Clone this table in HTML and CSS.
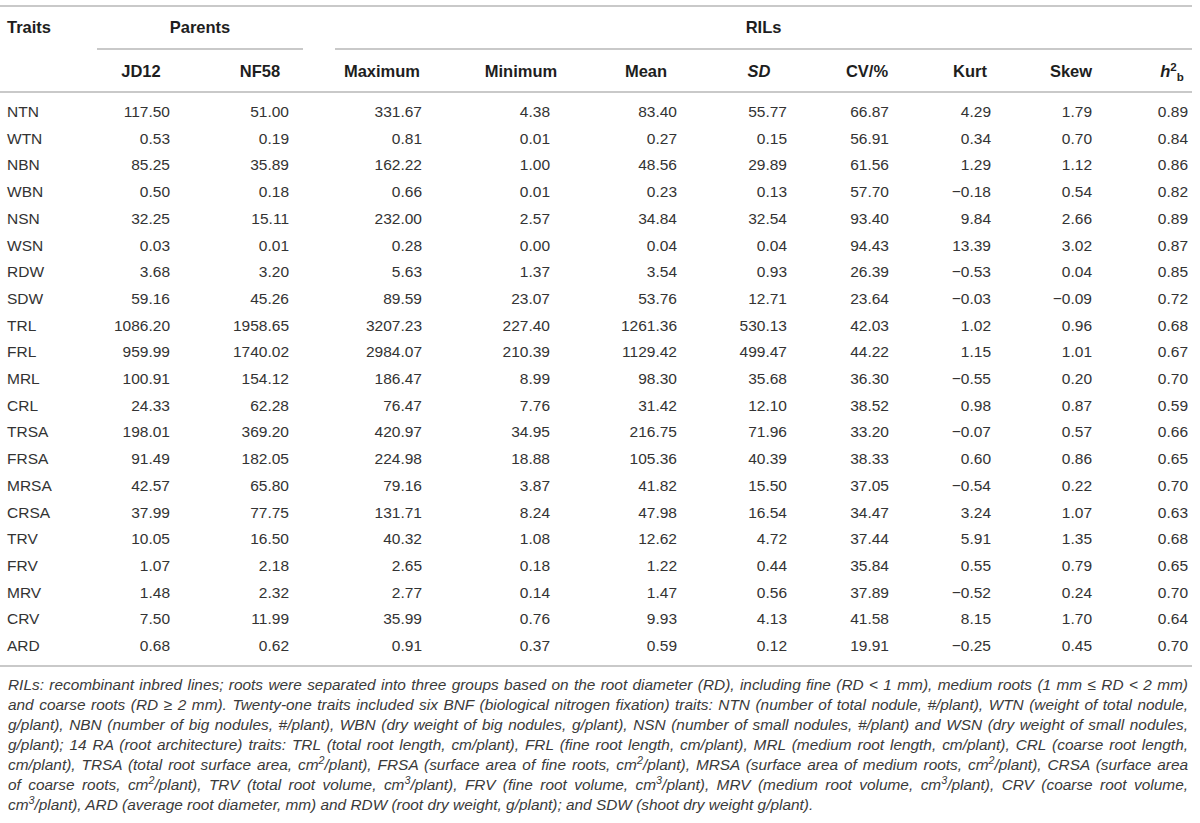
FILE: index.html
```html
<!DOCTYPE html>
<html lang="en">
<head>
    <meta charset="UTF-8">
    <meta name="viewport" content="width=device-width, initial-scale=1.0">
    <title>Traits of parents and RILs</title>
    <link rel="stylesheet" href="styles.css">
</head>
<body>

<div id="table-wrap">
    <table id="traits-table">
        <colgroup>
            <col class="col-trait">
            <col class="col-jd">
            <col class="col-nf">
            <col class="col-max">
            <col class="col-min">
            <col class="col-mean">
            <col class="col-sd">
            <col class="col-cv">
            <col class="col-kurt">
            <col class="col-skew">
            <col class="col-h2">
        </colgroup>
        <thead>
            <tr class="group-row">
                <th class="trait-head">Traits</th>
                <th colspan="2" class="group"><span class="group-label">Parents</span></th>
                <th colspan="8" class="group group-last"><span class="group-label">RILs</span></th>
            </tr>
            <tr class="sub-row">
                <th></th>
                <th>JD12</th>
                <th>NF58</th>
                <th>Maximum</th>
                <th>Minimum</th>
                <th>Mean</th>
                <th><i>SD</i></th>
                <th>CV/%</th>
                <th>Kurt</th>
                <th>Skew</th>
                <th><i>h</i><sup>2</sup><sub>b</sub></th>
            </tr>
        </thead>
        <tbody>
            <tr><td>NTN</td><td>117.50</td><td>51.00</td><td>331.67</td><td>4.38</td><td>83.40</td><td>55.77</td><td>66.87</td><td>4.29</td><td>1.79</td><td>0.89</td></tr>
            <tr><td>WTN</td><td>0.53</td><td>0.19</td><td>0.81</td><td>0.01</td><td>0.27</td><td>0.15</td><td>56.91</td><td>0.34</td><td>0.70</td><td>0.84</td></tr>
            <tr><td>NBN</td><td>85.25</td><td>35.89</td><td>162.22</td><td>1.00</td><td>48.56</td><td>29.89</td><td>61.56</td><td>1.29</td><td>1.12</td><td>0.86</td></tr>
            <tr><td>WBN</td><td>0.50</td><td>0.18</td><td>0.66</td><td>0.01</td><td>0.23</td><td>0.13</td><td>57.70</td><td>&minus;0.18</td><td>0.54</td><td>0.82</td></tr>
            <tr><td>NSN</td><td>32.25</td><td>15.11</td><td>232.00</td><td>2.57</td><td>34.84</td><td>32.54</td><td>93.40</td><td>9.84</td><td>2.66</td><td>0.89</td></tr>
            <tr><td>WSN</td><td>0.03</td><td>0.01</td><td>0.28</td><td>0.00</td><td>0.04</td><td>0.04</td><td>94.43</td><td>13.39</td><td>3.02</td><td>0.87</td></tr>
            <tr><td>RDW</td><td>3.68</td><td>3.20</td><td>5.63</td><td>1.37</td><td>3.54</td><td>0.93</td><td>26.39</td><td>&minus;0.53</td><td>0.04</td><td>0.85</td></tr>
            <tr><td>SDW</td><td>59.16</td><td>45.26</td><td>89.59</td><td>23.07</td><td>53.76</td><td>12.71</td><td>23.64</td><td>&minus;0.03</td><td>&minus;0.09</td><td>0.72</td></tr>
            <tr><td>TRL</td><td>1086.20</td><td>1958.65</td><td>3207.23</td><td>227.40</td><td>1261.36</td><td>530.13</td><td>42.03</td><td>1.02</td><td>0.96</td><td>0.68</td></tr>
            <tr><td>FRL</td><td>959.99</td><td>1740.02</td><td>2984.07</td><td>210.39</td><td>1129.42</td><td>499.47</td><td>44.22</td><td>1.15</td><td>1.01</td><td>0.67</td></tr>
            <tr><td>MRL</td><td>100.91</td><td>154.12</td><td>186.47</td><td>8.99</td><td>98.30</td><td>35.68</td><td>36.30</td><td>&minus;0.55</td><td>0.20</td><td>0.70</td></tr>
            <tr><td>CRL</td><td>24.33</td><td>62.28</td><td>76.47</td><td>7.76</td><td>31.42</td><td>12.10</td><td>38.52</td><td>0.98</td><td>0.87</td><td>0.59</td></tr>
            <tr><td>TRSA</td><td>198.01</td><td>369.20</td><td>420.97</td><td>34.95</td><td>216.75</td><td>71.96</td><td>33.20</td><td>&minus;0.07</td><td>0.57</td><td>0.66</td></tr>
            <tr><td>FRSA</td><td>91.49</td><td>182.05</td><td>224.98</td><td>18.88</td><td>105.36</td><td>40.39</td><td>38.33</td><td>0.60</td><td>0.86</td><td>0.65</td></tr>
            <tr><td>MRSA</td><td>42.57</td><td>65.80</td><td>79.16</td><td>3.87</td><td>41.82</td><td>15.50</td><td>37.05</td><td>&minus;0.54</td><td>0.22</td><td>0.70</td></tr>
            <tr><td>CRSA</td><td>37.99</td><td>77.75</td><td>131.71</td><td>8.24</td><td>47.98</td><td>16.54</td><td>34.47</td><td>3.24</td><td>1.07</td><td>0.63</td></tr>
            <tr><td>TRV</td><td>10.05</td><td>16.50</td><td>40.32</td><td>1.08</td><td>12.62</td><td>4.72</td><td>37.44</td><td>5.91</td><td>1.35</td><td>0.68</td></tr>
            <tr><td>FRV</td><td>1.07</td><td>2.18</td><td>2.65</td><td>0.18</td><td>1.22</td><td>0.44</td><td>35.84</td><td>0.55</td><td>0.79</td><td>0.65</td></tr>
            <tr><td>MRV</td><td>1.48</td><td>2.32</td><td>2.77</td><td>0.14</td><td>1.47</td><td>0.56</td><td>37.89</td><td>&minus;0.52</td><td>0.24</td><td>0.70</td></tr>
            <tr><td>CRV</td><td>7.50</td><td>11.99</td><td>35.99</td><td>0.76</td><td>9.93</td><td>4.13</td><td>41.58</td><td>8.15</td><td>1.70</td><td>0.64</td></tr>
            <tr><td>ARD</td><td>0.68</td><td>0.62</td><td>0.91</td><td>0.37</td><td>0.59</td><td>0.12</td><td>19.91</td><td>&minus;0.25</td><td>0.45</td><td>0.70</td></tr>
        </tbody>
    </table>

    <p class="table-note">
        <span class="note-line">RILs: recombinant inbred lines; roots were separated into three groups based on the root diameter (RD), including fine (RD &lt; 1 mm), medium roots (1 mm &le; RD &lt; 2 mm)</span>
        <span class="note-line">and coarse roots (RD &ge; 2 mm). Twenty-one traits included six BNF (biological nitrogen fixation) traits: NTN (number of total nodule, #/plant), WTN (weight of total nodule,</span>
        <span class="note-line">g/plant), NBN (number of big nodules, #/plant), WBN (dry weight of big nodules, g/plant), NSN (number of small nodules, #/plant) and WSN (dry weight of small nodules,</span>
        <span class="note-line">g/plant); 14 RA (root architecture) traits: TRL (total root length, cm/plant), FRL (fine root length, cm/plant), MRL (medium root length, cm/plant), CRL (coarse root length,</span>
        <span class="note-line">cm/plant), TRSA (total root surface area, cm<sup>2</sup>/plant), FRSA (surface area of fine roots, cm<sup>2</sup>/plant), MRSA (surface area of medium roots, cm<sup>2</sup>/plant), CRSA (surface area</span>
        <span class="note-line">of coarse roots, cm<sup>2</sup>/plant), TRV (total root volume, cm<sup>3</sup>/plant), FRV (fine root volume, cm<sup>3</sup>/plant), MRV (medium root volume, cm<sup>3</sup>/plant), CRV (coarse root volume,</span>
        <span class="note-line">cm<sup>3</sup>/plant), ARD (average root diameter, mm) and RDW (root dry weight, g/plant); and SDW (shoot dry weight g/plant).</span>
    </p>
</div>

</body>
</html>
```

FILE: styles.css
```css
body {
    margin: 0;
    background: #fff;
    color: #333;
    font-family: "Liberation Sans", Arial, sans-serif;
    font-size: 15.5px;
}

#table-wrap {
    width: 1192px;
    padding-top: 5px;
}

#traits-table {
    width: 1192px;
    table-layout: fixed;
    border-collapse: collapse;
    border-top: 2px solid #c9c9c9;
    border-bottom: 2px solid #c9c9c9;
}

.col-trait { width: 81px; }
.col-jd { width: 97px; }
.col-nf { width: 141px; }
.col-max { width: 111px; }
.col-min { width: 128px; }
.col-mean { width: 127px; }
.col-sd { width: 110px; }
.col-cv { width: 102px; }
.col-kurt { width: 102px; }
.col-skew { width: 101px; }
.col-h2 { width: 92px; }

th {
    color: #1e1e1e;
    font-size: 16.5px;
    font-weight: bold;
    padding: 0;
}

.group-row th {
    line-height: 41px;
    vertical-align: top;
}

.trait-head {
    text-align: left;
    padding-left: 7px;
}

.group-label {
    display: block;
    margin: 0 16px;
    text-align: center;
    border-bottom: 2px solid #c9c9c9;
}

.group-last .group-label {
    margin-right: 0;
}

.sub-row th {
    line-height: 39px;
    padding-top: 2px;
    text-align: center;
    border-bottom: 2px solid #c9c9c9;
}

.sub-row th:nth-child(2) { padding-left: 23px; }
.sub-row th:nth-child(3) { padding-left: 23px; }
.sub-row th:nth-child(4) { padding-left: 15px; }
.sub-row th:nth-child(5) { padding-left: 54px; }
.sub-row th:nth-child(6) { padding-left: 49px; }
.sub-row th:nth-child(7) { padding-left: 38px; }
.sub-row th:nth-child(8) { padding-left: 42px; }
.sub-row th:nth-child(9) { padding-left: 44px; }
.sub-row th:nth-child(10) { padding-left: 43px; }
.sub-row th:nth-child(11) { padding-left: 52px; }

sup, sub {
    line-height: 0;
    font-size: 70%;
}

td {
    line-height: 26.7px;
    padding: 0 8px 0 0;
    text-align: right;
    white-space: nowrap;
}

td:first-child {
    text-align: left;
    padding-left: 7px;
}

td:nth-child(3) {
    padding-right: 30px;
}

td:last-child {
    padding-right: 4px;
}

tbody tr:first-child td {
    padding-top: 6px;
}

tbody tr:last-child td {
    padding-bottom: 5px;
}

.table-note {
    margin: 8px 4px 0 8px;
    font-size: 15.4px;
    font-style: italic;
    line-height: 20px;
    color: #3a3a3a;
}

.note-line {
    display: block;
    white-space: nowrap;
    text-align: justify;
    text-align-last: justify;
}

.note-line:last-child {
    text-align-last: left;
}
```
